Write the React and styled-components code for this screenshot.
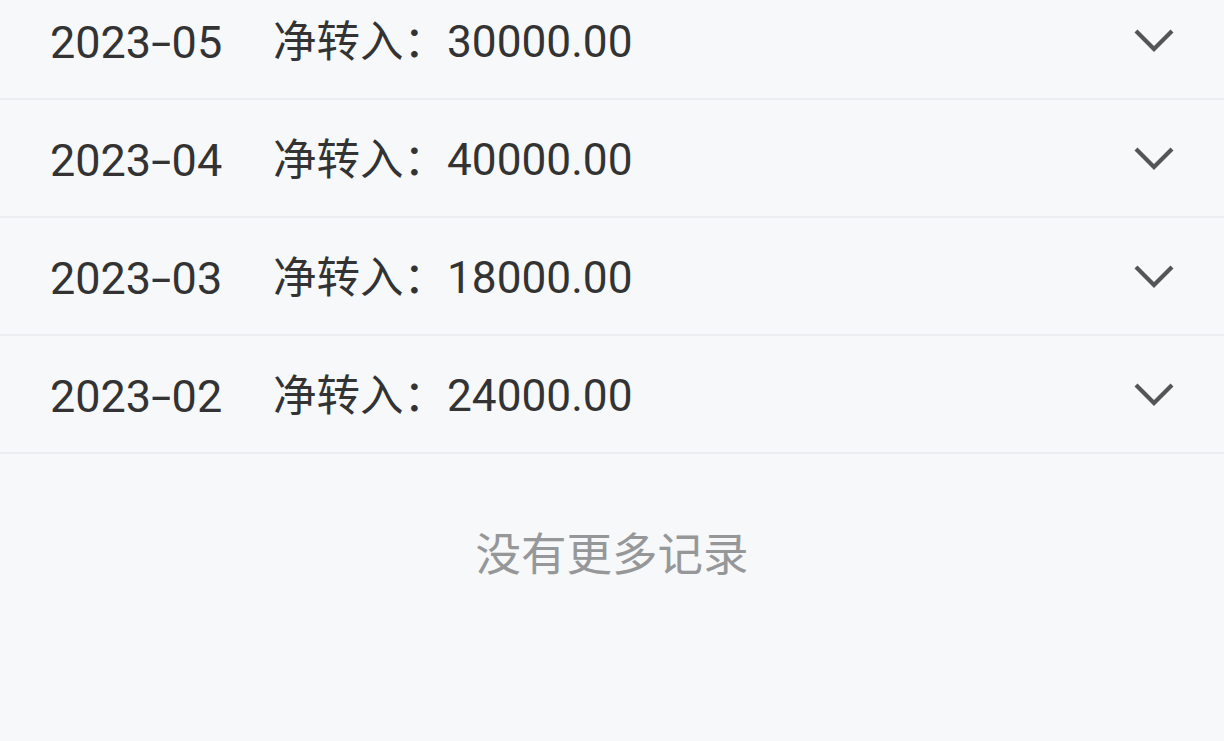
import styled, { createGlobalStyle } from "styled-components";

const GlobalStyle = createGlobalStyle`
	html, body {
		margin: 0;
		padding: 0;
		background: #f7f8fa;
	}
	body {
		font-family: Roboto, "Noto Sans CJK SC", sans-serif;
		color: #333334;
		overflow: hidden;
	}
`;

const records = [
	{ month: "2023-05", amount: "30000.00", },
	{ month: "2023-04", amount: "40000.00", },
	{ month: "2023-03", amount: "18000.00", },
	{ month: "2023-02", amount: "24000.00", },
];

// --------------------------------------------------

const Page = styled.div`
	width: 1224px;
	height: 741px;
	background: #f7f8fa;
	overflow: hidden;
`;

// list is scrolled a little, first row is cut at the top
const List = styled.div`
	margin-top: -18px;
	display: flex;
	flex-direction: column;
`;

const Row = styled.div`
	box-sizing: border-box;
	height: 118px;
	border-bottom: 2px solid #ebedf0;
	padding: 5px 50px 0 50px;
	display: flex;
	align-items: center;
	font-size: 45px;
	line-height: 60px;
`;

const Month = styled.span`
	width: 172px;
	margin-right: 51px;
	white-space: nowrap;
`;

const Dash = styled.span`
	display: inline-block;
	padding: 0 4px;
	transform: scaleX(1.6);
`;

const Total = styled.span`
	white-space: nowrap;
	margin-right: auto;
	font-size: 44.2px;
`;

const Label = styled.span`
	font-size: 43.5px;
`;

const Arrow = styled.svg`
	width: 40px;
	height: 24px;
	display: block;
	margin-top: -5px;
`;

const Finished = styled.div`
	padding-top: 67px;
	text-align: center;
	font-size: 45.5px;
	line-height: 60px;
	color: #969799;
	font-family: "Noto Sans CJK SC", sans-serif;
`;

const Chevron = () => (
	<Arrow viewBox = "0 0 40 24">
		<polyline
			points = "2,3 20,21 38,3"
			fill = "none"
			stroke = "#555"
			strokeWidth = "4.2"
		/>
	</Arrow>
);

export default () => (
	<Page>
		<GlobalStyle />
		<List>
			{
				records.map(({ month, amount, }) => {
					const [ y, m, ] = month.split("-");
					return (
						<Row key = { month }>
							<Month>{ y }<Dash>-</Dash>{ m }</Month>
							<Total><Label>净转入：</Label>{ amount }</Total>
							<Chevron />
						</Row>
					);
				})
			}
		</List>
		<Finished>没有更多记录</Finished>
	</Page>
);
